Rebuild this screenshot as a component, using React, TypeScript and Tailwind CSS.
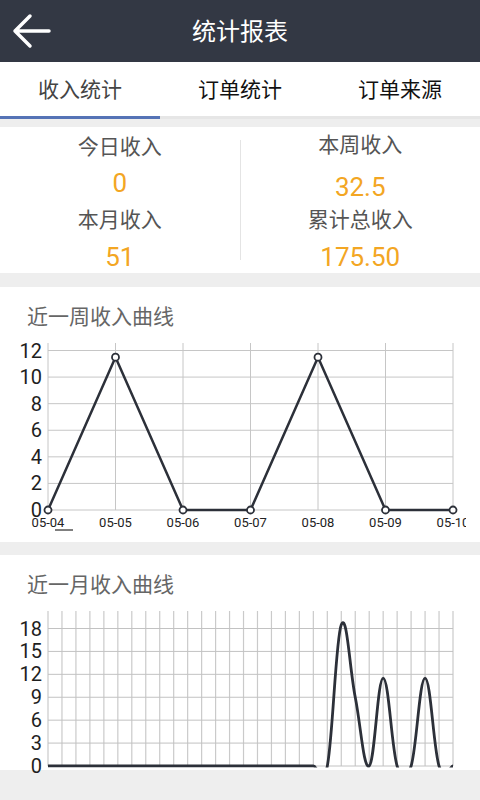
import React from "react";

const weekVals = [0, 11.5, 0, 0, 11.5, 0, 0];
const weekLabels = ["05-04", "05-05", "05-06", "05-07", "05-08", "05-09", "05-10"];
const wx = (i: number) => 48 + (i * 405) / 6;
const wy = (v: number) => 510 - v * (510 - 350.5) / 12;

const monthVals: number[] = Array.from({ length: 30 }, () => 0);
monthVals[21] = 18.5;
monthVals[22] = 9;
monthVals[24] = 11.5;
monthVals[27] = 11.5;
const mx = (i: number) => 48 + (i * 405) / 29;
const my = (v: number) => 766 - v * (766 - 628.5) / 18;

function cubicPath(): string {
  const pts = monthVals.map((v, i) => ({ x: mx(i), y: my(v) }));
  const it = 0.2;
  let d = `M${pts[0].x} ${pts[0].y}`;
  for (let j = 1; j < pts.length; j++) {
    const pp = pts[Math.max(j - 2, 0)];
    const p = pts[j - 1];
    const c = pts[j];
    const n = pts[Math.min(j + 1, pts.length - 1)];
    const c1x = p.x + (c.x - pp.x) * it;
    const c1y = p.y + (c.y - pp.y) * it;
    const c2x = c.x - (n.x - p.x) * it;
    const c2y = c.y - (n.y - p.y) * it;
    d += ` C${c1x} ${c1y} ${c2x} ${c2y} ${c.x} ${c.y}`;
  }
  return d;
}

function WeekChart() {
  const line = weekVals.map((v, i) => `${i === 0 ? "M" : "L"}${wx(i)} ${wy(v)}`).join(" ");
  return (
    <svg width="480" height="213" viewBox="0 329 480 213" className="block">
      <defs>
        <clipPath id="wlab">
          <rect x="0" y="329" width="466" height="213" />
        </clipPath>
      </defs>
      {[0, 2, 4, 6, 8, 10, 12].map((v) => (
        <line key={v} x1="48" x2="453" y1={wy(v)} y2={wy(v)} stroke="#c6c6c6" strokeWidth="1" />
      ))}
      {weekVals.map((_, i) => (
        <line key={i} x1={wx(i)} x2={wx(i)} y1="343" y2="510" stroke="#c6c6c6" strokeWidth="1" />
      ))}
      {[0, 2, 4, 6, 8, 10, 12].map((v) => (
        <text key={v} x="42" y={wy(v) + 7} textAnchor="end" fontSize="20" fill="#1e1e1e">
          {v}
        </text>
      ))}
      <g clipPath="url(#wlab)">
        {weekLabels.map((l, i) => (
          <text key={l} x={wx(i)} y="527" textAnchor="middle" fontSize="13" fill="#222">
            {l}
          </text>
        ))}
      </g>
      <line x1="55" x2="73" y1="530" y2="530" stroke="#555" strokeWidth="1.5" />
      <path d={line} fill="none" stroke="#2c3039" strokeWidth="2.5" strokeLinejoin="round" />
      {weekVals.map((v, i) => (
        <circle key={i} cx={wx(i)} cy={wy(v)} r="3.5" fill="#fff" stroke="#2c3039" strokeWidth="1.8" />
      ))}
    </svg>
  );
}

function MonthChart() {
  return (
    <svg width="480" height="173" viewBox="0 597 480 173" className="block overflow-visible">
      <defs>
        <clipPath id="mclip">
          <rect x="48" y="597" width="405" height="170.5" />
        </clipPath>
      </defs>
      {monthVals.map((_, i) => (
        <line key={i} x1={mx(i)} x2={mx(i)} y1="611" y2="766" stroke="#cacaca" strokeWidth="1.2" />
      ))}
      {[0, 3, 6, 9, 12, 15, 18].map((v) => (
        <line key={v} x1="48" x2="453" y1={my(v)} y2={my(v)} stroke="#c2c2c2" strokeWidth="1" />
      ))}
      {[0, 3, 6, 9, 12, 15, 18].map((v) => (
        <text key={v} x="42" y={my(v) + 7} textAnchor="end" fontSize="20" fill="#1e1e1e">
          {v}
        </text>
      ))}
      <path d={cubicPath()} fill="none" stroke="#2c3039" strokeWidth="2.8" clipPath="url(#mclip)" />
    </svg>
  );
}

export default function App() {
  return (
    <div className="w-[480px] h-[800px] overflow-hidden bg-[#eeeeee] font-[Roboto,'Noto_Sans_CJK_SC',sans-serif]">
      <div className="relative h-[62px] bg-[#333844] flex items-center justify-center">
        <svg width="60" height="62" viewBox="0 0 60 62" className="absolute left-0 top-0">
          <path d="M49 31 H15 M30 16 L15 31 L30 46" fill="none" stroke="#fff" strokeWidth="3.5" strokeLinecap="round" strokeLinejoin="round" />
        </svg>
        <span className="text-white text-[24px] leading-[30px] mt-[1px]">统计报表</span>
      </div>
      <div className="h-[54px] bg-white grid grid-cols-3 items-center text-center text-[21px] leading-[26px] pt-[2px]">
        <span className="text-[#444]">收入统计</span>
        <span className="text-[#111]">订单统计</span>
        <span className="text-[#111]">订单来源</span>
      </div>
      <div className="h-[3px] bg-[#e6e6e6]">
        <div className="h-full w-[160px] bg-[#5573b6]" />
      </div>
      <div className="h-[8px]" />
      <div className="h-[146px] bg-white grid grid-cols-[1fr_1px_1fr]">
        <div className="flex flex-col items-center pt-[8px]">
          <span className="text-[21px] leading-[24px] text-[#555]">今日收入</span>
          <span className="mt-[9px] text-[26px] leading-[30px] text-[#f3a623]">0</span>
          <span className="mt-[10px] text-[21px] leading-[24px] text-[#555]">本月收入</span>
          <span className="mt-[10px] text-[26px] leading-[30px] text-[#f3a623]">51</span>
        </div>
        <div className="my-[13px] bg-[#e4e4e4]" />
        <div className="flex flex-col items-center pt-[6px]">
          <span className="text-[21px] leading-[24px] text-[#555]">本周收入</span>
          <span className="mt-[15px] text-[26px] leading-[30px] text-[#f3a623]">32.5</span>
          <span className="mt-[6px] text-[21px] leading-[24px] text-[#555]">累计总收入</span>
          <span className="mt-[10px] text-[26px] leading-[30px] text-[#f3a623]">175.50</span>
        </div>
      </div>
      <div className="h-[14px]" />
      <div className="bg-white">
        <div className="pt-[18px] pl-[27px] text-[21px] leading-[24px] text-[#666]">近一周收入曲线</div>
        <WeekChart />
      </div>
      <div className="h-[13px]" />
      <div className="bg-white">
        <div className="pt-[18px] pl-[27px] text-[21px] leading-[24px] text-[#666]">近一月收入曲线</div>
        <MonthChart />
      </div>
    </div>
  );
}
